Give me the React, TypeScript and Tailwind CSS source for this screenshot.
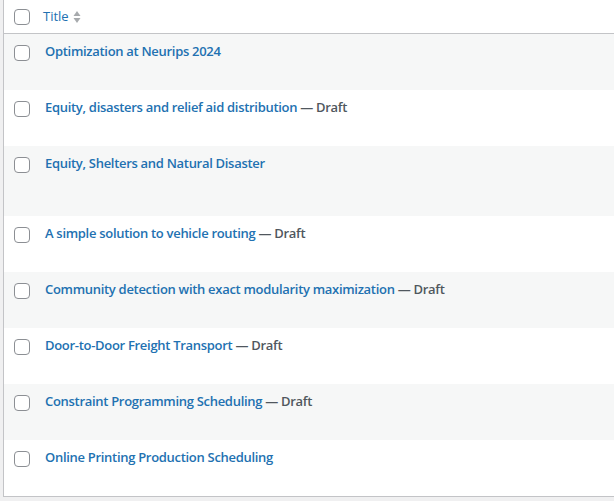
import React from "react";

type Post = { title: string; draft?: boolean; tall?: boolean };

const posts: Post[] = [
  { title: "Optimization at Neurips 2024" },
  { title: "Equity, disasters and relief aid distribution", draft: true },
  { title: "Equity, Shelters and Natural Disaster", tall: true },
  { title: "A simple solution to vehicle routing", draft: true },
  { title: "Community detection with exact modularity maximization", draft: true },
  { title: "Door-to-Door Freight Transport", draft: true },
  { title: "Constraint Programming Scheduling", draft: true },
  { title: "Online Printing Production Scheduling" },
];

function Box() {
  return <span className="block w-4 h-4 rounded-[4px] border border-[#8c8f94] bg-white shrink-0" />;
}

function SortArrows() {
  return (
    <svg width="8" height="14" viewBox="0 0 8 14" className="ml-[4px]">
      <path d="M4 1 L7.5 6 H0.5 Z" fill="#a7aaad" />
      <path d="M4 13 L7.5 8 H0.5 Z" fill="#a7aaad" />
    </svg>
  );
}

export default function App() {
  return (
    <div
      className="w-[614px] h-[501px] bg-[#f0f0f1] pl-[3px] overflow-hidden"
      style={{ fontFamily: '"Open Sans", "Noto Sans", sans-serif' }}
    >
      <div className="bg-white border-l border-b border-[#c3c4c7]">
        {/* header */}
        <div className="h-[34px] flex items-center border-b border-[#c3c4c7]">
          <div className="w-[39px] pl-[10px] pt-[1px] flex">
            <Box />
          </div>
          <div className="flex items-center text-[13px] text-[#2271b1] pt-[1px]">
            Title
            <SortArrows />
          </div>
        </div>
        {posts.map((p, i) => (
          <div
            key={p.title}
            className={`flex items-start pt-[8px] ${p.tall ? "h-[70px]" : "h-[56px]"} ${
              i % 2 === 0 ? "bg-[#f6f7f7]" : "bg-white"
            }`}
          >
            <div className="w-[41px] pl-[10px] pt-[3px] flex">
              <Box />
            </div>
            <div className="text-[13px] font-semibold leading-[18px] tracking-[-0.3px]">
              <span className="text-[#2271b1]">{p.title}</span>
              {p.draft && <span className="text-[#50575e]"> — Draft</span>}
            </div>
          </div>
        ))}
      </div>
    </div>
  );
}
